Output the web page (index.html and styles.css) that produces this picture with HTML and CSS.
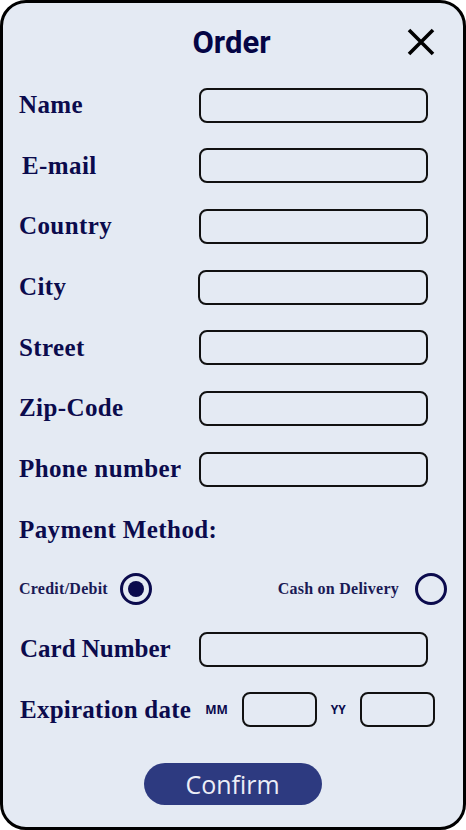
FILE: index.html
```html
<!DOCTYPE html>
<html>
<head>
<meta charset="utf-8">
<link rel="stylesheet" href="styles.css">
</head>
<body>
<div class="panel">
  <header class="header">
    <h1 class="title">Order</h1>
    <button class="close" aria-label="Close">
      <svg width="32" height="32" viewBox="0 0 32 32"><path d="M4 4 L28 28 M28 4 L4 28" stroke="#000" stroke-width="3.6" stroke-linecap="butt" fill="none"/></svg>
    </button>
  </header>
  <form class="form">
    <div class="row"><label class="label">Name</label><span class="input"></span></div>
    <div class="row"><label class="label indent3">E-mail</label><span class="input"></span></div>
    <div class="row"><label class="label">Country</label><span class="input"></span></div>
    <div class="row"><label class="label">City</label><span class="input shift"></span></div>
    <div class="row"><label class="label">Street</label><span class="input"></span></div>
    <div class="row"><label class="label">Zip-Code</label><span class="input"></span></div>
    <div class="row"><label class="label">Phone number</label><span class="input"></span></div>
    <div class="row"><span class="label">Payment Method:</span></div>
    <div class="row radios">
      <span class="radio-opt"><span class="small">Credit/Debit</span><span class="radio checked"></span></span>
      <span class="radio-opt cod"><span class="small">Cash on Delivery</span><span class="radio"></span></span>
    </div>
    <div class="row"><label class="label indent1 tight">Card Number</label><span class="input"></span></div>
    <div class="row exp">
      <label class="label indent1 exp-label">Expiration date</label>
      <span class="unit mm">MM</span><span class="input short"></span>
      <span class="unit yy">YY</span><span class="input short"></span>
    </div>
  </form>
  <div class="actions"><button class="confirm" type="button">Confirm</button></div>
</div>
</body>
</html>
```
FILE: styles.css
```css
* { box-sizing: border-box; }
body { margin: 0; background: #fff; }
.panel {
  width: 466px; height: 830px;
  border: 3px solid #000;
  border-radius: 26px;
  background: #e4eaf3;
  padding: 0 35px 0 16px;
  position: relative;
  color: #0b0b4d;
}
.header {
  height: 50px; margin-top: 14px;
  display: flex; align-items: center; justify-content: center;
}
.title {
  margin: 0 0 0 16px;
  font-family: Roboto, "Liberation Sans", sans-serif;
  font-weight: 700; font-size: 31px; color: #050545;
}
.close {
  position: absolute; right: 26px; top: 23px;
  border: 0; background: none; padding: 0; width: 32px; height: 32px;
}
.close svg { display: block; }
.form {
  margin-top: 20.5px;
  display: flex; flex-direction: column; gap: 25.7px;
}
.row {
  height: 35px; display: flex; align-items: center;
}
.label {
  font-family: "Liberation Serif", serif; font-weight: 700;
  font-size: 25px; letter-spacing: 0.4px; color: #0b0b4d; flex: 1;
}
.label.tight { letter-spacing: 0; }
.indent3 { padding-left: 3px; }
.indent1 { padding-left: 1px; }
.input {
  flex-shrink: 0;
  width: 229px; height: 35px;
  border: 2px solid #111; border-radius: 8px;
  background: #e4eaf3;
}
.input.shift { margin-left: -1px; width: 230px; }
.radios { justify-content: space-between; margin-right: -19px; margin-top: -2px; }
.radio-opt { display: flex; align-items: center; gap: 12px; }
.radio-opt.cod { gap: 16px; }
.small {
  font-family: "Liberation Serif", serif; font-weight: 700;
  font-size: 16px; letter-spacing: 0.25px; color: #1a1a55;
}
.radio {
  width: 32px; height: 32px; border-radius: 50%;
  border: 3px solid #0b0b4d; position: relative;
}
.radio.checked::after {
  content: ""; position: absolute; left: 5px; top: 5px;
  width: 16px; height: 16px; border-radius: 50%; background: #0b0b4d;
}
.exp .label { flex: 0 0 auto; letter-spacing: 0.25px; }
.unit {
  font-family: "Open Sans", sans-serif; font-weight: 700;
  font-size: 12px; color: #0b0b4d;
}
.mm { margin-left: 14px; margin-right: 14px; }
.yy { margin-left: 14px; margin-right: 14px; }
.input.short { width: 75px; }
.actions { display: flex; justify-content: center; margin-top: 36px; padding-left: 19px; }
.confirm {
  width: 178px; height: 42px; border-radius: 21px; border: 0;
  background: #2d3a80; color: #eceef7;
  font-family: "Open Sans", sans-serif; font-size: 25px; padding: 0;
  margin-left: -1px;
}
```
